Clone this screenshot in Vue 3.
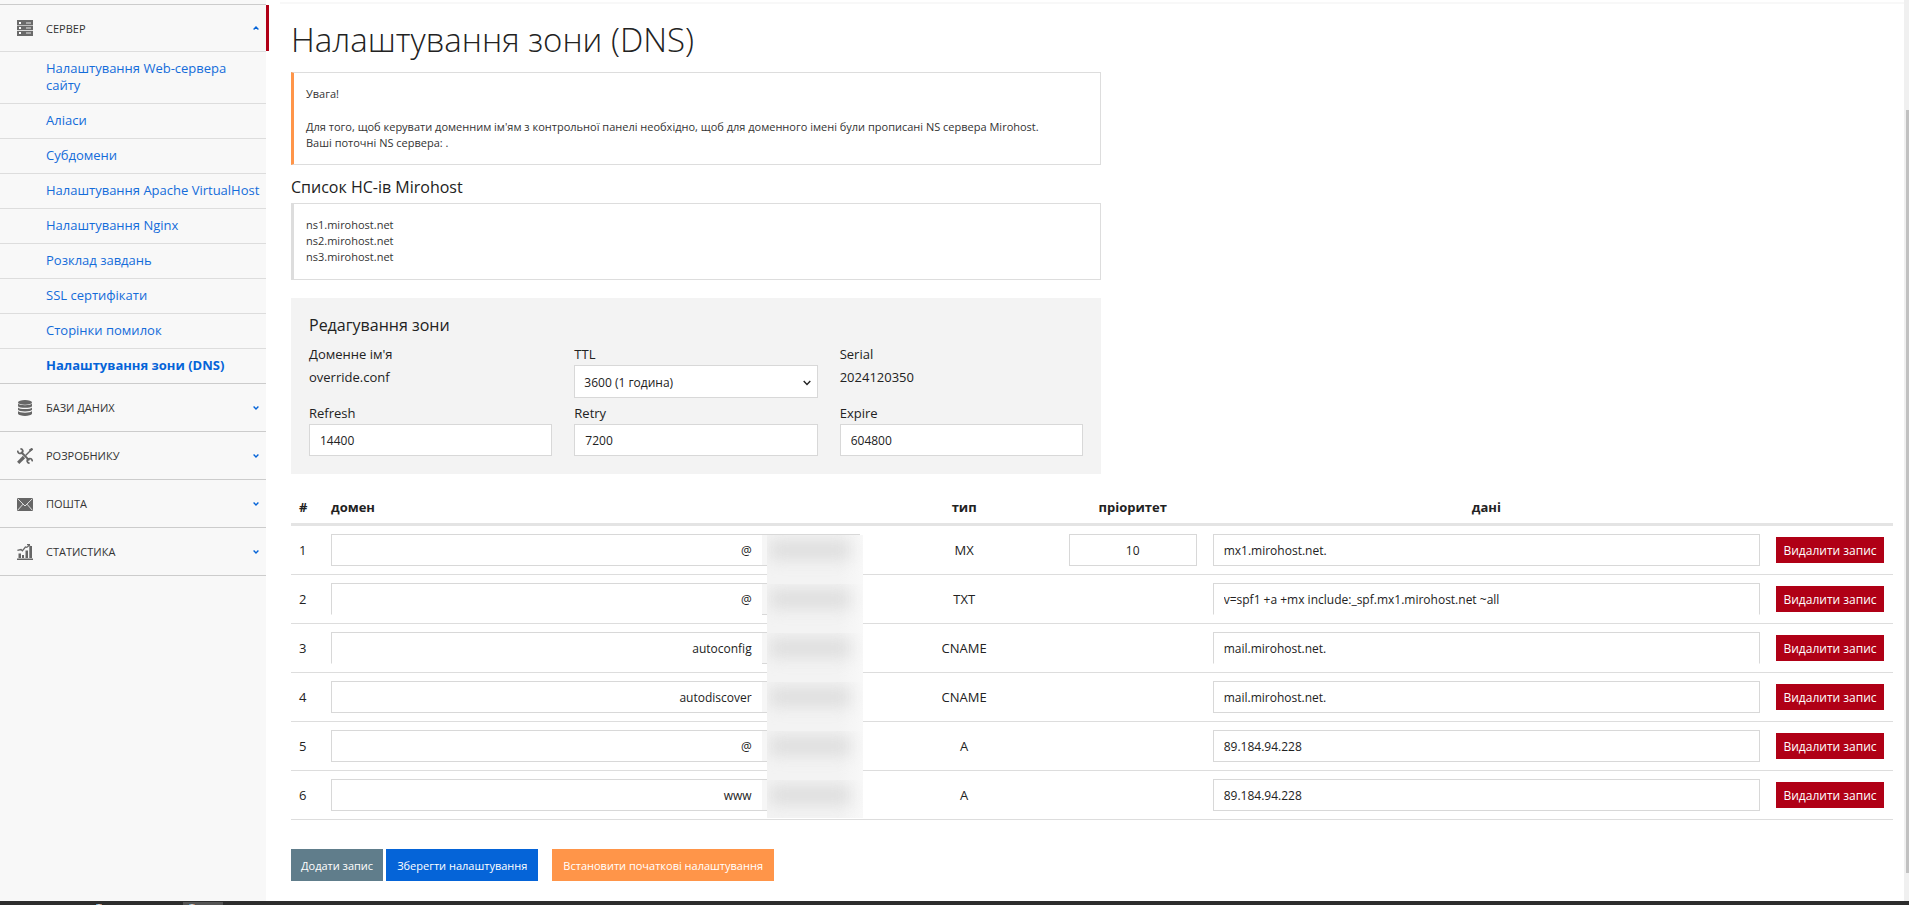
<script setup>
import { ref } from 'vue'

const serverLinks = [
  'Налаштування Web-сервера сайту',
  'Аліаси',
  'Субдомени',
  'Налаштування Apache VirtualHost',
  'Налаштування Nginx',
  'Розклад завдань',
  'SSL сертифікати',
  'Сторінки помилок',
  'Налаштування зони (DNS)',
]
const current = serverLinks[serverLinks.length - 1]

const sections = [
  { title: 'Бази даних', icon: 'db' },
  { title: 'Розробнику', icon: 'tools' },
  { title: 'Пошта', icon: 'mail' },
  { title: 'Статистика', icon: 'stats' },
]

const nameServers = ['ns1.mirohost.net', 'ns2.mirohost.net', 'ns3.mirohost.net']

const ttl = ref('3600')
const refresh = ref('14400')
const retry = ref('7200')
const expire = ref('604800')

const records = ref([
  { domain: '@', type: 'MX', priority: '10', data: 'mx1.mirohost.net.' },
  { domain: '@', type: 'TXT', data: 'v=spf1 +a +mx include:_spf.mx1.mirohost.net ~all', open: true },
  { domain: 'autoconfig', type: 'CNAME', data: 'mail.mirohost.net.', open: true },
  { domain: 'autodiscover', type: 'CNAME', data: 'mail.mirohost.net.' },
  { domain: '@', type: 'A', data: '89.184.94.228' },
  { domain: 'www', type: 'A', data: '89.184.94.228' },
])
</script>

<template>
  <div class="screen">
    <div class="page">
      <nav class="sidebar">
        <button type="button" class="section active">
          <svg class="icon" viewBox="0 0 16 16">
            <g fill="#6a6a6a">
              <rect width="16" height="5" /><rect y="5.6" width="16" height="4.6" /><rect y="11" width="16" height="5" />
            </g>
            <g fill="#fff">
              <rect x="2" y="2" width="2" height="2" /><rect x="2" y="7" width="2" height="2" /><rect x="2" y="12" width="2" height="2" />
            </g>
            <g fill="#a8a8a8">
              <rect x="9" y="2" width="5" height="2" /><rect x="9" y="7" width="5" height="2" /><rect x="9" y="12" width="5" height="2" />
            </g>
          </svg>
          <span>Сервер</span>
          <svg class="chevron" viewBox="0 0 6 4"><path d="M.6 3.4 3 1 5.4 3.4" /></svg>
        </button>
        <ul class="links">
          <li v-for="link in serverLinks" :key="link">
            <a href="#" :class="{ current: link === current }">{{ link }}</a>
          </li>
        </ul>
        <button v-for="s in sections" :key="s.title" type="button" class="section">
          <svg v-if="s.icon === 'db'" class="icon" viewBox="0 0 16 16" fill="#666">
            <ellipse cx="8" cy="2.4" rx="7" ry="2.3" />
            <path d="M1 3.6c1 2.2 13 2.2 14 0v2.6c-1 2.2-13 2.2-14 0z" />
            <path d="M1 7.4c1 2.2 13 2.2 14 0v2.4c-1 2.2-13 2.2-14 0z" />
            <path d="M1 11c1 2.2 13 2.2 14 0v2.8c-1 2.8-13 2.8-14 0z" />
          </svg>
          <svg v-else-if="s.icon === 'tools'" class="icon" viewBox="0 0 16 16" fill="none" stroke="#666">
            <path d="M4 4 12.4 12.4" stroke-width="2" />
            <path d="M.8 2.6C.6 5 3 6.200 4.800 5S6 1.200 3.400.7M15.200 13.400c.2-2.400-2.200-3.600-4-2.400s-1.200 3.800 1.400 4.300" stroke-width="1.700" />
            <path d="M14.500 1.500 8.600 7.400" stroke-width="1.400" />
            <path d="M15.600.6 12.600 2.800" stroke-width="2.400" />
            <path d="M7 9 1.200 14.800" stroke-width="3.200" />
          </svg>
          <svg v-else-if="s.icon === 'mail'" class="icon" viewBox="0 0 16 16">
            <rect y="2" width="16" height="13" fill="#666" />
            <path d="M.5 2.600 8 10l7.500-7.400M.5 14.400 6 8.200M15.500 14.400 10 8.200" fill="none" stroke="#eee" stroke-width=".9" />
          </svg>
          <svg v-else class="icon" viewBox="0 0 16 16" fill="#666">
            <path d="M0 14.400h16V16H0zM1.500 9.500H4V14H1.500zM5 11h2v3H5zM8.500 6.500H11V14H8.500zM12.300 2H15v12h-2.700z" />
            <path d="M.4 6.400 4 5.500l1.400 1.300L8.400 3l1.400.4L13 .700M10 .700h3" fill="none" stroke="#666" stroke-width="1.300" />
          </svg>
          <span>{{ s.title }}</span>
          <svg class="chevron" viewBox="0 0 6 4"><path d="M.6.6 3 3 5.400.6" /></svg>
        </button>
      </nav>

      <main class="content">
        <div class="strip"></div>
        <div class="inner">
          <h1>Налаштування зони (DNS)</h1>

          <section class="note warning">
            <p>Увага!</p>
            <p>
              Для того, щоб керувати доменним ім'ям з контрольної панелі необхідно, щоб для доменного імені були прописані NS сервера Mirohost.<br />
              Ваші поточні NS сервера: .
            </p>
          </section>

          <h2>Список НС-ів Mirohost</h2>
          <section class="note">
            <div v-for="ns in nameServers" :key="ns">{{ ns }}</div>
          </section>

          <form class="zone" @submit.prevent>
            <h2>Редагування зони</h2>
            <div class="fields">
              <div class="field">
                <span class="label">Доменне ім'я</span>
                <span class="value">override.conf</span>
              </div>
              <div class="field">
                <label for="ttl">TTL</label>
                <div class="select">
                  <select id="ttl" v-model="ttl">
                    <option value="3600">3600 (1 година)</option>
                  </select>
                  <svg viewBox="0 0 8 6"><path d="M.7 1 4 4.400 7.300 1" /></svg>
                </div>
              </div>
              <div class="field">
                <span class="label">Serial</span>
                <span class="value">2024120350</span>
              </div>
              <div class="field">
                <label for="refresh">Refresh</label>
                <input id="refresh" v-model="refresh" type="text" />
              </div>
              <div class="field">
                <label for="retry">Retry</label>
                <input id="retry" v-model="retry" type="text" />
              </div>
              <div class="field">
                <label for="expire">Expire</label>
                <input id="expire" v-model="expire" type="text" />
              </div>
            </div>
          </form>

          <table class="records">
            <colgroup>
              <col class="c-num" /><col class="c-domain" /><col class="c-type" /><col class="c-priority" /><col /><col class="c-action" />
            </colgroup>
            <thead>
              <tr>
                <th class="left">#</th>
                <th class="left">домен</th>
                <th>тип</th>
                <th>пріоритет</th>
                <th>дані</th>
                <th></th>
              </tr>
            </thead>
            <tbody>
              <tr v-for="(r, i) in records" :key="i">
                <td class="left">{{ i + 1 }}</td>
                <td>
                  <div class="domain">
                    <input v-model="r.domain" type="text" :class="{ open: r.open }" aria-label="домен" />
                    <span class="suffix"><span class="mask"></span></span>
                  </div>
                </td>
                <td>{{ r.type }}</td>
                <td><input v-if="r.priority" v-model="r.priority" type="text" class="center" aria-label="пріоритет" /></td>
                <td><input v-model="r.data" type="text" :class="{ open: r.open }" aria-label="дані" /></td>
                <td><button type="button" class="remove">Видалити запис</button></td>
              </tr>
            </tbody>
          </table>

          <div class="actions">
            <button type="button" class="add">Додати запис</button>
            <button type="button" class="save">Зберегти налаштування</button>
            <button type="button" class="reset">Встановити початкові налаштування</button>
          </div>
        </div>
      </main>

      <div class="scrollbar"><div class="thumb"></div></div>
    </div>
    <footer class="taskbar"><i class="dot"></i><div class="task"><i class="dot"></i></div></footer>
  </div>
</template>

<style>
body {
  margin: 0;
}
</style>

<style scoped>
.screen {
  min-height: 100vh;
  display: flex;
  flex-direction: column;
  background: #fff;
  color: #222;
  font-family: "Open Sans", "Noto Sans", sans-serif;
  font-size: 13px;
  line-height: 17px;
}
.screen * {
  box-sizing: border-box;
}
button,
input,
select {
  font: inherit;
  color: inherit;
  margin: 0;
  border-radius: 0;
}
.page {
  flex: 1;
  display: flex;
}
.sidebar {
  width: 266px;
  flex: none;
  padding-top: 4px;
  background: #f8f8f8;
}
.section {
  position: relative;
  display: flex;
  align-items: center;
  gap: 13px;
  width: 100%;
  height: 48px;
  padding: 0 7px 0 17px;
  border: 0;
  border-bottom: 1px solid #ccc;
  background: none;
  font-size: 11px;
  text-transform: uppercase;
  color: #333;
  text-align: left;
}
.section.active {
  border-top: 1px solid #ccc;
  border-bottom-color: #ddd;
}
.section.active::after {
  content: "";
  position: absolute;
  right: -3px;
  top: 0;
  bottom: 0;
  width: 3px;
  background: #b00016;
}
.section span {
  flex: 1;
}
.icon {
  width: 16px;
  height: 16px;
}
.chevron {
  width: 6px;
  height: 4px;
  fill: none;
  stroke: #0564d8;
  stroke-width: 1.4;
}
.links {
  list-style: none;
  margin: 0;
  padding: 0;
}
.links li {
  padding: 8px 4px 9px 46px;
  border-bottom: 1px solid #ddd;
}
.links li:last-child {
  border-bottom-color: #ccc;
}
.links a {
  color: #146cda;
  text-decoration: none;
}
.links .current {
  color: #0564d8;
  font-weight: 700;
}
.content {
  flex: 1;
  min-width: 0;
  padding: 2px 0 18px 14px;
}
.strip {
  height: 2px;
  background: #f8f8f8;
}
.inner {
  padding: 16px 11px 0 11px;
}
h1 {
  margin: 0 0 12px;
  font-size: 33px;
  line-height: 40px;
  font-weight: 300;
}
h2 {
  margin: 0;
  font-size: 16px;
  line-height: 22px;
  font-weight: 400;
}
.note {
  max-width: 810px;
  border: 1px solid #ddd;
  border-left: 3px solid #ddd;
  padding: 13px 12px 14px;
  font-size: 11px;
  line-height: 16px;
  color: #333;
  margin-bottom: 18px;
}
.note.warning {
  border-left-color: #ff9549;
  padding: 13px 12px;
  margin-bottom: 11px;
}
.note.warning + h2 {
  margin-bottom: 5px;
}
.note p {
  margin: 0;
}
.note p + p {
  margin-top: 17px;
}
.zone {
  max-width: 810px;
  padding: 16px 18px 18px;
  background: #f3f3f3;
}
.zone h2 {
  margin-bottom: 10px;
}
.fields {
  display: grid;
  grid-template-columns: repeat(3, 1fr);
  gap: 7px 22px;
}
.field {
  display: flex;
  flex-direction: column;
  align-items: stretch;
}
.field label,
.label {
  margin-bottom: 2px;
}
.value {
  margin-top: 4px;
}
input {
  display: block;
  width: 100%;
  min-width: 0;
  height: 32px;
  padding: 0 10px;
  border: 1px solid #d8d8d8;
  background: #fff;
  font-size: 12px;
}
.select {
  position: relative;
}
.select select {
  display: block;
  width: 100%;
  height: 33px;
  padding: 1px 10px 0 9px;
  border: 1px solid #d8d8d8;
  background: #fff;
  font-size: 12px;
  appearance: none;
}
.select svg {
  position: absolute;
  right: 7px;
  top: 15px;
  width: 8px;
  height: 6px;
  fill: none;
  stroke: #222;
  stroke-width: 1.4;
  pointer-events: none;
}
.records {
  width: 100%;
  margin-top: 17px;
  border-collapse: separate;
  border-spacing: 0;
  table-layout: fixed;
  text-align: center;
}
.c-num {
  width: 32px;
}
.c-domain {
  width: 34%;
}
.c-type {
  width: 193px;
}
.c-priority {
  width: 144px;
}
.c-action {
  width: 125px;
}
th {
  height: 35px;
  padding: 0 8px;
  border-bottom: 3px solid #e4e4e4;
  font-weight: 700;
}
td {
  height: 49px;
  padding: 0 8px;
  border-bottom: 1px solid #ddd;
}
.left {
  text-align: left;
}
.domain {
  display: flex;
}
.domain input {
  flex: 1;
  border-right: 0;
  text-align: right;
}
input.open {
  border-bottom-color: transparent;
}
.center {
  text-align: center;
}
.suffix {
  position: relative;
  flex: none;
  width: 98px;
  height: 32px;
  border: 1px solid #d8d8d8;
  border-left: 0;
  background: #f6f6f6;
}
.mask {
  position: absolute;
  z-index: 1;
  left: 5px;
  right: -4px;
  top: 0;
  bottom: -19px;
  overflow: hidden;
  background: linear-gradient(to right, #f3f3f3 75%, #f8f8f8);
}
.mask::after {
  content: "";
  position: absolute;
  left: 3px;
  right: 13px;
  top: 6px;
  height: 18px;
  background: #dcdcdc;
  filter: blur(8px);
}
tr:last-child .mask {
  bottom: -8px;
}
.remove {
  display: block;
  width: 108px;
  height: 26px;
  padding: 0;
  border: 0;
  background: #b00016;
  font-size: 12px;
  color: #fff;
}
.actions {
  display: flex;
  margin-top: 29px;
}
.actions button {
  height: 32px;
  padding: 0 11px;
  border: 0;
  font-size: 11px;
  color: #fff;
}
.actions .add {
  padding: 0 10px;
  background: #607d8b;
}
.actions .save {
  margin: 0 14px 0 3px;
  background: #0564d8;
}
.actions .reset {
  background: #ff9549;
}
.scrollbar {
  flex: none;
  width: 5px;
  padding: 110px 0 28px 2px;
  display: flex;
  background: #f0f0f0;
}
.thumb {
  flex: 1;
  background: #c1c1c1;
}
.taskbar {
  display: flex;
  align-items: flex-end;
  height: 4px;
  padding-left: 96px;
  background: #2d2d2d;
}
.task {
  width: 40px;
  height: 3px;
  margin-left: 81px;
  padding: 2px 0 0 6px;
  background: #555;
}
.dot {
  display: block;
  width: 6px;
  height: 1px;
  background: linear-gradient(to right, #3a8fc0, #ddd, #b06a40);
}
</style>
